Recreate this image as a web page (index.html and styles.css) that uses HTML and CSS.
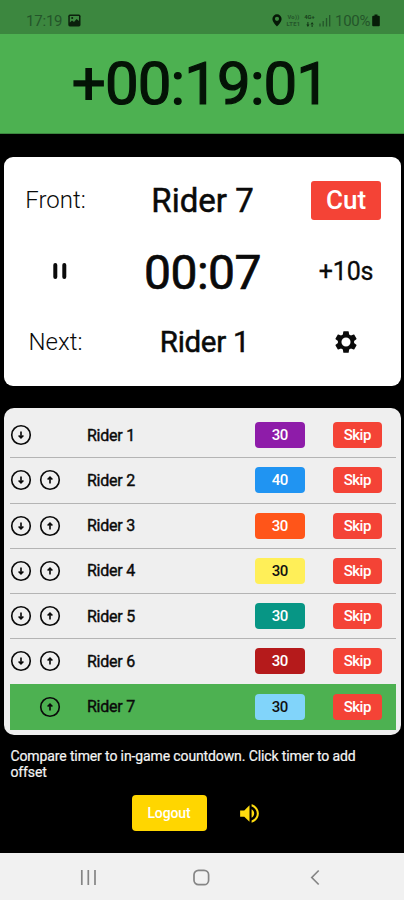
FILE: index.html
```html
<!DOCTYPE html>
<html lang="en">
<head>
<meta charset="utf-8">
<title>Rider timer</title>
<link rel="stylesheet" href="styles.css">
</head>
<body>
<svg class="defs" width="0" height="0">
  <symbol id="down" viewBox="0 0 22 22"><circle cx="11" cy="11" r="8.500" fill="none" stroke="currentColor" stroke-width="1.500"/><path d="M11 7.800v6M8.800 11.500 11 13.700l2.200-2.200" fill="none" stroke="currentColor" stroke-width="1.500"/></symbol>
  <symbol id="up" viewBox="0 0 22 22"><circle cx="11" cy="11" r="8.500" fill="none" stroke="currentColor" stroke-width="1.500"/><path d="M11 14.200v-6M8.800 10.500 11 8.300l2.200 2.200" fill="none" stroke="currentColor" stroke-width="1.500"/></symbol>
</svg>
<div class="status">
  <span class="clock">17:19</span>
  <svg class="photo" width="13" height="13" viewBox="0 0 13 13"><rect x=".3" y=".6" width="12.2" height="11.8" rx="1.6" fill="#0b200c"/><path d="M1.8 2h9.2v5L8.6 5 6 8 4 6.5 1.8 8.4z" fill="#3c873f"/><circle cx="4.2" cy="4" r="1" fill="#0b200c"/></svg>
  <svg class="pin" width="10" height="13" viewBox="0 0 10 13"><path fill-rule="evenodd" d="M5 .3A4.6 4.6 0 0 0 .4 4.900C.4 8 5 12.400 5 12.400S9.600 8 9.600 4.900A4.600 4.600 0 0 0 5 .3zM5 2.700a2.100 2.100 0 1 1 0 4.200 2.100 2.100 0 0 1 0-4.200z" fill="#061807"/></svg>
  <span class="net volte"><span>Vo))</span><span>LTE1</span></span>
  <span class="net lte"><span>4G+</span><svg width="8" height="5" viewBox="0 0 8 5"><path d="M.3 2.500h3.200L1.900 5zM1.400 0h1v3h-1zM4.500 2.500h3.200L6.100 0zM5.600 2h1v3h-1z" fill="#123516"/></svg></span>
  <svg class="signal" width="12" height="13" viewBox="0 0 12 13"><path d="M1 9.500v3M4.200 7v5.500M7.500 4v8.500M10.700 1v11.500" stroke="#24552a" stroke-width="1.300"/></svg>
  <span class="percent">100%</span>
  <svg class="battery" width="8" height="13" viewBox="0 0 8 13"><path d="M2.500.5h3v1.300h1.300q1 0 1 1v8.500q0 1-1 1H1.200q-1 0-1-1V2.800q0-1 1-1h1.300z" fill="#071c08"/></svg>
</div>
<header class="total"><span>+00:19:01</span></header>

<section class="panel">
  <div class="label front">Front:</div>
  <div class="rider now">Rider 7</div>
  <div><button class="cut">Cut</button></div>
  <div class="pausebox"><svg width="14" height="16" viewBox="0 0 14 16"><path d="M2.300 2v12M11.300 2v12" stroke="#0a0a0a" stroke-width="4" stroke-linecap="round"/></svg></div>
  <div class="countdown">00:07</div>
  <div class="add">+10s</div>
  <div class="label next">Next:</div>
  <div class="rider following">Rider 1</div>
  <div class="gearbox"><svg width="26" height="26" viewBox="0 0 24 24"><path fill="#0a0a0a" fill-rule="evenodd" d="M19.430 12.980c.04-.32.07-.64.07-.98s-.03-.66-.07-.98l2.110-1.650c.19-.15.24-.42.12-.64l-2-3.460c-.12-.22-.39-.3-.61-.22l-2.490 1c-.52-.4-1.080-.73-1.690-.98l-.38-2.650C14.460 2.180 14.250 2 14 2h-4c-.25 0-.46.18-.49.42l-.38 2.650c-.61.25-1.170.59-1.690.98l-2.490-1c-.23-.09-.49 0-.61.22l-2 3.460c-.13.22-.07.49.12.64l2.110 1.650c-.04.32-.07.65-.07.98s.03.66.07.98l-2.110 1.650c-.19.15-.24.42-.12.64l2 3.460c.12.22.39.3.61.22l2.490-1c.52.4 1.080.73 1.690.98l.38 2.650c.03.24.24.42.49.42h4c.25 0 .46-.18.49-.42l.38-2.650c.61-.25 1.170-.59 1.690-.98l2.490 1c.23.09.49 0 .61-.22l2-3.460c.12-.22.07-.49-.12-.64zM12 16.200a4.200 4.200 0 1 1 0-8.400 4.200 4.200 0 0 1 0 8.400z"/></svg></div>
</section>

<section class="list">
  <div class="row"><svg class="arrow"><use href="#down"/></svg><i></i><span class="name">Rider 1</span><span class="time purple">30</span><button class="skip">Skip</button></div>
  <div class="row"><svg class="arrow"><use href="#down"/></svg><svg class="arrow"><use href="#up"/></svg><span class="name">Rider 2</span><span class="time blue">40</span><button class="skip">Skip</button></div>
  <div class="row"><svg class="arrow"><use href="#down"/></svg><svg class="arrow"><use href="#up"/></svg><span class="name">Rider 3</span><span class="time orange">30</span><button class="skip">Skip</button></div>
  <div class="row"><svg class="arrow"><use href="#down"/></svg><svg class="arrow"><use href="#up"/></svg><span class="name">Rider 4</span><span class="time yellow">30</span><button class="skip">Skip</button></div>
  <div class="row"><svg class="arrow"><use href="#down"/></svg><svg class="arrow"><use href="#up"/></svg><span class="name">Rider 5</span><span class="time teal">30</span><button class="skip">Skip</button></div>
  <div class="row"><svg class="arrow"><use href="#down"/></svg><svg class="arrow"><use href="#up"/></svg><span class="name">Rider 6</span><span class="time red">30</span><button class="skip">Skip</button></div>
  <div class="row active"><i></i><svg class="arrow"><use href="#up"/></svg><span class="name">Rider 7</span><span class="time sky">30</span><button class="skip">Skip</button></div>
</section>

<p class="hint">Compare timer to in-game countdown. Click timer to add offset</p>
<div class="actions">
  <button class="logout">Logout</button>
  <svg width="25" height="25" viewBox="0 0 24 24"><path fill="#ffdc0f" d="M3 9v6h4l5 5V4L7 9H3zm13.500 3c0-1.770-1.020-3.290-2.500-4.030v8.050c1.480-.73 2.500-2.250 2.500-4.020zM14 3.230v2.060c2.890.86 5 3.540 5 6.710s-2.110 5.850-5 6.710v2.060c4.010-.91 7-4.490 7-8.770s-2.990-7.860-7-8.770z"/></svg>
</div>
<nav class="nav">
  <svg width="16" height="17" viewBox="0 0 16 17"><path d="M1.800 1v15M8.300 1v15M15 1v15" stroke="#858585" stroke-width="1.700"/></svg>
  <svg width="17" height="17" viewBox="0 0 17 17"><rect x="1" y="1.300" width="14.600" height="14.400" rx="4.500" fill="none" stroke="#858585" stroke-width="1.700"/></svg>
  <svg width="10" height="17" viewBox="0 0 10 17"><path d="M8.700 1.500 1.800 8.500l6.900 7" fill="none" stroke="#858585" stroke-width="1.700"/></svg>
</nav>
</body>
</html>
```

FILE: styles.css
```css
* { box-sizing: border-box; }
body {
  margin: 0;
  width: 404px;
  height: 900px;
  overflow: hidden;
  background: #000;
  color: #0a0a0a;
  font-family: Roboto, sans-serif;
  font-weight: 400;
  display: flex;
  flex-direction: column;
}
button { border: 0; padding: 0; font: inherit; font-weight: 500; color: #fff; }
svg { display: block; flex: none; }
.defs { display: none; }

.status {
  height: 34px;
  flex: none;
  padding: 7px 24px 0 26px;
  background: #3c873f;
  display: flex;
  align-items: center;
  color: #24552a;
  font-size: 15px;
}
.clock { width: 42px; letter-spacing: -.2px; }
.pin { margin-left: auto; }
.net {
  height: 13px;
  display: flex;
  flex-direction: column;
  align-items: center;
  justify-content: space-between;
  font-size: 5.8px;
  line-height: 6.5px;
  font-weight: 700;
  white-space: nowrap;
}
.volte { margin-left: 4px; width: 15px; letter-spacing: .3px; }
.lte { margin-left: 3px; width: 11px; color: #173f1b; }
.signal { margin-left: 4px; }
.percent { margin-left: 4px; width: 37px; letter-spacing: -.3px; }

.total {
  height: 99.5px;
  flex: none;
  background: #4db151;
  border-bottom: 1px solid #3c873f;
  padding-right: 3px;
  text-align: center;
  font-size: 60px;
  line-height: 99px;
  letter-spacing: -.9px;
  -webkit-text-stroke: 1.2px;
  color: #041306;
}

.panel {
  height: 229px;
  flex: none;
  margin: 23px 3px 0 4px;
  padding: 8px 0;
  border-radius: 9px;
  background: #fff;
  display: grid;
  grid-template-columns: 103px 191px 96px;
  grid-template-rows: 71px 71px 71px;
  align-items: center;
  justify-items: center;
}
.label { font-size: 24px; font-weight: 300; }
.rider { font-size: 33px; padding-top: 1px; -webkit-text-stroke: .5px; }
.following { font-size: 29.5px; padding: 0 0 0 4px; letter-spacing: -.3px; }
.countdown { font-size: 48px; letter-spacing: -.5px; padding-top: 2px; -webkit-text-stroke: .7px; }
.add { font-size: 25px; padding-top: 1px; letter-spacing: -.2px; -webkit-text-stroke: .3px; }
.pausebox { padding-left: 8px; }
.cut {
  width: 70px;
  height: 39px;
  border-radius: 3px;
  background: #f44336;
  font-size: 26px;
}

.list {
  height: 327px;
  flex: none;
  margin: 22.5px 3px 0 4px;
  padding: 5px 5px 0 5.500px;
  border-radius: 10px;
  background: #efefef;
}
.row {
  height: 45.25px;
  border-bottom: 1.5px solid #b4b4b4;
  display: grid;
  grid-template-columns: 28.5px 49px 168px 77.500px 50px;
  align-items: center;
}
.row:nth-child(6) { border-color: #4db151; }
.active { background: #4db151; border-color: #4db151; }
.arrow { width: 24px; height: 24px; margin-left: -.5px; }
.name { font-size: 16px; letter-spacing: -.25px; -webkit-text-stroke: .4px; }
.time, .skip {
  width: 49.500px;
  height: 26px;
  border-radius: 4px;
  line-height: 26px;
  text-align: center;
  font-size: 15px;
  font-weight: 500;
  letter-spacing: -.5px;
  color: #fff;
}
.skip { background: #f44336; }
.purple { background: #8e1ca9; }
.blue { background: #2094f2; }
.orange { background: #ff5519; }
.yellow { background: #ffef58; color: #111; }
.teal { background: #079685; }
.red { background: #b51a1b; }
.sky { background: #81d4fa; color: #111; }

.hint {
  margin: 14px 30px 0 10.500px;
  font-size: 14px;
  line-height: 15.500px;
  letter-spacing: -.12px;
  color: #f4f4f4;
  -webkit-text-stroke: .2px;
}
.actions {
  margin-top: 14.5px;
  height: 37px;
  display: flex;
  align-items: center;
  gap: 30px;
  padding-left: 131.500px;
}
.logout {
  width: 75px;
  height: 36px;
  border-radius: 4px;
  background: #ffd600;
  font-size: 14px;
  letter-spacing: -.1px;
}
.nav {
  margin-top: auto;
  height: 47px;
  flex: none;
  background: #f1f1f1;
  display: flex;
  align-items: center;
  justify-content: space-between;
  padding: 1px 84px 0 80px;
}
.nav svg:nth-child(2) { margin-right: 3px; }
```
